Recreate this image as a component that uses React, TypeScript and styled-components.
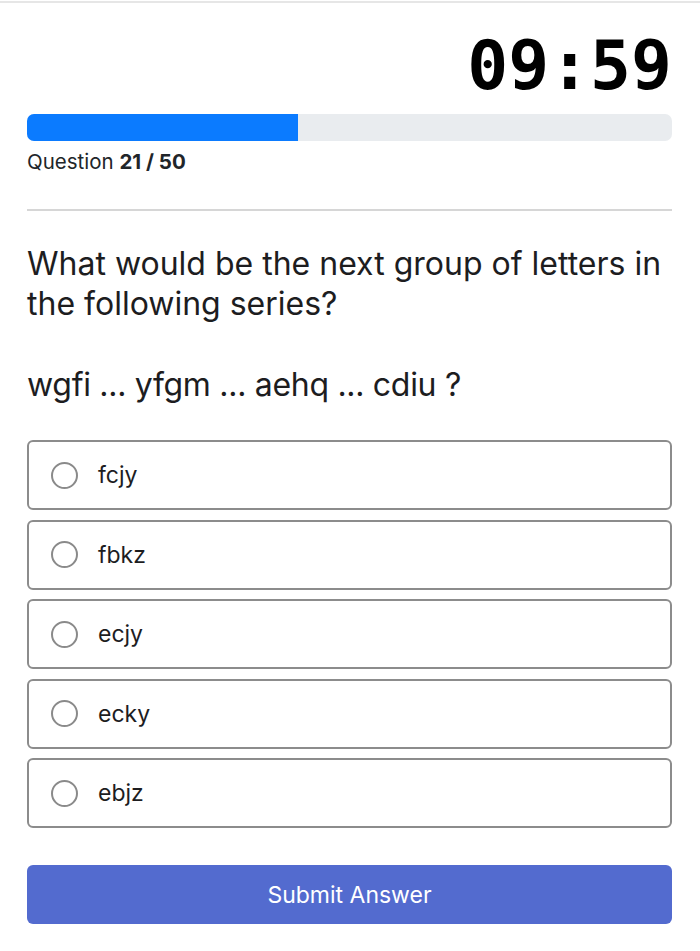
import React from "react";
import styled, { createGlobalStyle } from "styled-components";

const GlobalStyle = createGlobalStyle`
  html, body { margin: 0; padding: 0; background: #ffffff; }
  body { font-family: Inter, "Liberation Sans", Arial, sans-serif; color: #212529; }
  * { box-sizing: border-box; }
`;

const Page = styled.div`
  width: 700px;
  min-height: 951px;
  border-top: 2px solid #e6e6e6;
  margin-top: 1px;
  padding: 0 28px 0 27px;
  display: flex;
  flex-direction: column;
`;

const Timer = styled.div`
  font-family: "DejaVu Sans Mono", "Liberation Mono", monospace;
  font-weight: 700;
  font-size: 68px;
  line-height: 68px;
  color: #000;
  text-align: right;
  margin-top: 29px;
`;

const Track = styled.div`
  margin-top: 14px;
  height: 27px;
  border-radius: 7px;
  background: #e9ecef;
  overflow: hidden;
  display: flex;
`;

const Fill = styled.div`
  height: 100%;
  background: #0b7bff;
`;

const Counter = styled.div`
  margin-top: 9px;
  font-size: 20.5px;
  line-height: 24px;
  color: #212529;
  b { font-weight: 700; }
`;

const Divider = styled.hr`
  margin: 35px 0 0;
  border: 0;
  border-top: 2px solid #d6d6d6;
`;

const Question = styled.p`
  margin: 33px 0 0;
  font-size: 32px;
  line-height: 40px;
  color: #1d1d1f;
`;

const Series = styled.p`
  margin: 41px 0 0;
  font-size: 32px;
  line-height: 40px;
  color: #1d1d1f;
  letter-spacing: -0.3px;
`;

const Options = styled.div`
  margin-top: 35px;
  display: flex;
  flex-direction: column;
  gap: 9.5px;
`;

const Option = styled.label`
  height: 70px;
  border: 2px solid #8c8c8c;
  border-radius: 6px;
  display: flex;
  align-items: center;
  padding-left: 22px;
  gap: 20px;
  font-size: 23px;
  color: #1d1d1f;
`;

const Radio = styled.span`
  width: 27px;
  height: 27px;
  border-radius: 50%;
  border: 2px solid #8a8a8a;
  flex: none;
`;

const Submit = styled.button`
  margin-top: 37px;
  height: 59px;
  border: 0;
  border-radius: 6px;
  background: #536bcf;
  color: #fff;
  font-family: Inter, "Liberation Sans", Arial, sans-serif;
  font-size: 23px;
  width: 100%;
`;

const options = ["fcjy", "fbkz", "ecjy", "ecky", "ebjz"];

export default function App() {
  const current = 21;
  const total = 50;
  return (
    <>
      <GlobalStyle />
      <Page>
        <Timer>09:59</Timer>
        <Track>
          <Fill style={{ width: `${(current / total) * 100}%` }} />
        </Track>
        <Counter>
          Question <b>{current} / {total}</b>
        </Counter>
        <Divider />
        <Question>What would be the next group of letters in the following series?</Question>
        <Series>wgfi ... yfgm ... aehq ... cdiu ?</Series>
        <Options>
          {options.map((o) => (
            <Option key={o}>
              <Radio />
              {o}
            </Option>
          ))}
        </Options>
        <Submit>Submit Answer</Submit>
      </Page>
    </>
  );
}
